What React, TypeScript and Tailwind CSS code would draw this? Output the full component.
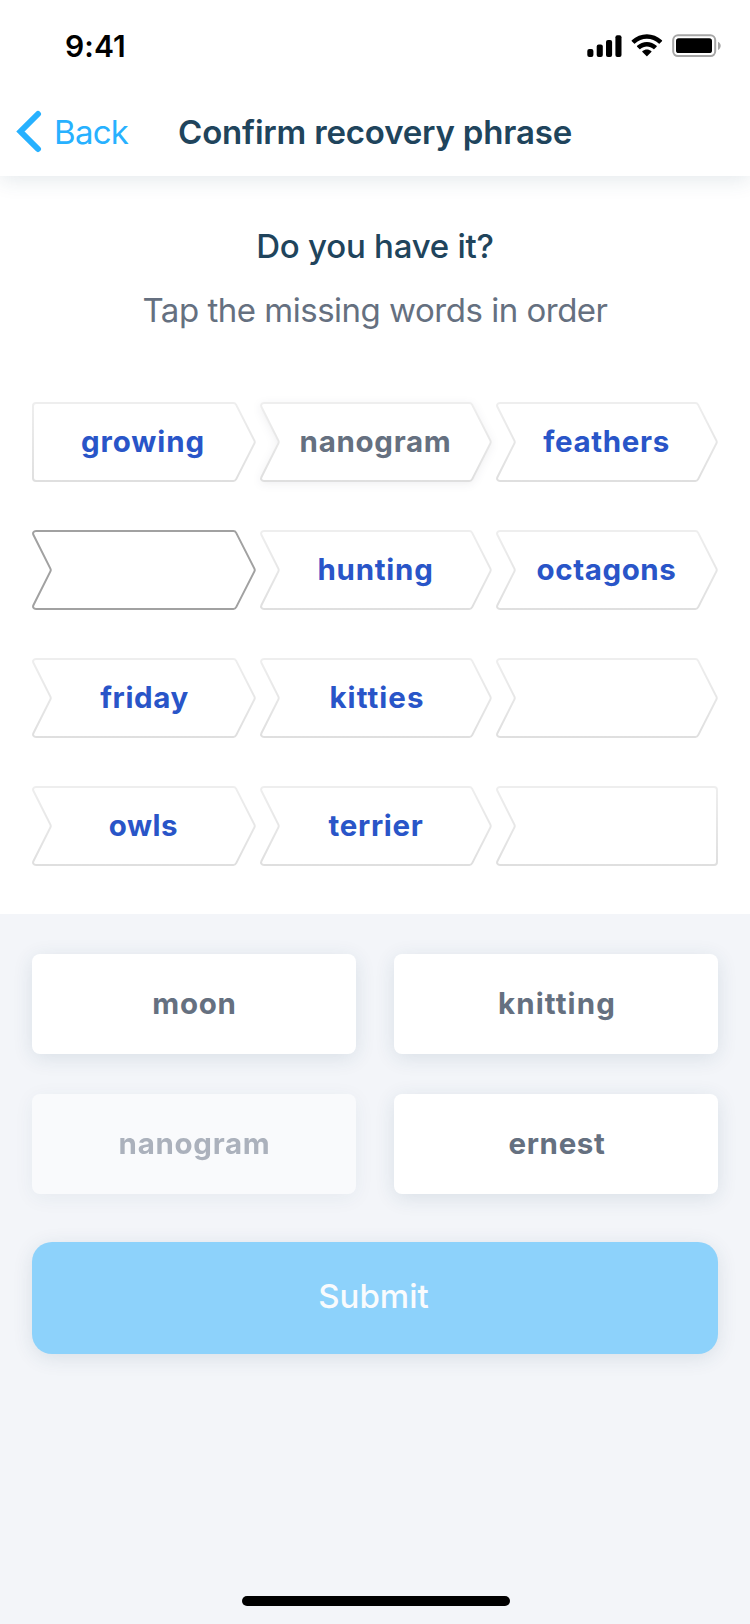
import React from "react";

type Status = "given" | "picked" | "active" | "empty";
interface Word {
  text: string;
  status: Status;
  tracking?: string;
}

const rows: Word[][] = [
  [
    { text: "growing", status: "given", tracking: "tracking-[0.9px] pr-[2px]" },
    { text: "nanogram", status: "picked", tracking: "tracking-[0.7px] pr-[1px]" },
    { text: "feathers", status: "given", tracking: "tracking-[0.65px] pr-[1px]" },
  ],
  [
    { text: "", status: "active" },
    { text: "hunting", status: "given", tracking: "tracking-[0.75px] pr-[1px]" },
    { text: "octagons", status: "given", tracking: "tracking-[0.6px] pr-[1px]" },
  ],
  [
    { text: "friday", status: "given", tracking: "tracking-[0.6px] pl-[1px]" },
    { text: "kitties", status: "given", tracking: "tracking-[1.05px] pl-[2px]" },
    { text: "", status: "empty" },
  ],
  [
    { text: "owls", status: "given", tracking: "tracking-[0.5px] pr-[1px]" },
    { text: "terrier", status: "given", tracking: "tracking-[0.7px]" },
    { text: "", status: "empty" },
  ],
];

const options = [
  { text: "moon", used: false, tracking: "tracking-[0.7px] pl-px" },
  { text: "knitting", used: false, tracking: "tracking-[1.1px] pl-[2px]" },
  { text: "nanogram", used: true, tracking: "tracking-[0.7px] pl-px" },
  { text: "ernest", used: false, tracking: "tracking-[0.65px] pl-[2px]" },
];

const widths = [224, 232, 222];

function outline(w: number, flatLeft: boolean, flatRight: boolean) {
  const right = flatRight
    ? `H${w - 4} Q${w - 1} 1 ${w - 1} 4 V76 Q${w - 1} 79 ${w - 4} 79`
    : `H${w - 22.6} Q${w - 20.8} 1 ${w - 19.8} 2.9 L${w - 1.6} 38.6 Q${w - 0.9} 40 ${w - 1.6} 41.4 L${w - 19.8} 77.1 Q${w - 20.8} 79 ${w - 22.6} 79`;
  const left = flatLeft
    ? "H4 Q1 79 1 76 V4 Q1 1 4 1 Z"
    : "H4 C1.6 79 0.4 77.2 1.5 75 L18.4 41.4 Q19.1 40 18.4 38.6 L1.5 5 C0.4 2.8 1.6 1 4 1 Z";
  return `M4 1 ${right} ${left}`;
}

function Chip({ word, row, col }: { word: Word; row: number; col: number }) {
  const w = widths[col];
  return (
    <div className="grid h-20 place-items-center" style={{ width: w }}>
      <svg
        width={w}
        height={80}
        viewBox={`0 0 ${w} 80`}
        className={`col-start-1 row-start-1 overflow-visible ${
          word.status === "picked" ? "drop-shadow-[0_2px_4px_rgba(30,30,60,0.07)]" : ""
        }`}
      >
        <path
          d={outline(w, row === 0 && col === 0, row === 3 && col === 2)}
          fill="#fff"
          stroke={word.status === "active" ? "#a1a1a1" : "url(#edge)"}
          strokeWidth={2}
        />
      </svg>
      <span
        className={`z-10 col-start-1 row-start-1 pb-[3px] text-[29.5px] leading-[40px] font-bold ${
          word.status === "picked" ? "text-[#657080]" : "text-[#2955c8]"
        } ${word.tracking ?? ""}`}
      >
        {word.text}
      </span>
    </div>
  );
}

function StatusIcons() {
  return (
    <svg width="138" height="26" viewBox="586 33 138 26">
      <rect x="587.3" y="49" width="6.1" height="8" rx="2" />
      <rect x="596.7" y="44.6" width="6.1" height="12.4" rx="2" />
      <rect x="606" y="40" width="6.1" height="17" rx="2" />
      <rect x="615.4" y="35.2" width="6.1" height="21.8" rx="2" />
      <path
        transform="translate(631.6 34.3) scale(2)"
        d="M7.637 2.277C9.853 2.277 11.984 3.129 13.59 4.656C13.71 4.774 13.904 4.772 14.023 4.652L15.179 3.486C15.239 3.425 15.273 3.343 15.272 3.257C15.272 3.172 15.237 3.09 15.176 3.03C10.961-1.01 4.311-1.01.096 3.03C.035 3.09 0 3.171 0 3.257C0 3.343.033 3.425.093 3.486L1.25 4.652C1.369 4.772 1.562 4.774 1.683 4.656C3.289 3.129 5.421 2.277 7.637 2.277ZM7.637 6.073C8.854 6.073 10.028 6.525 10.931 7.343C11.053 7.459 11.245 7.456 11.364 7.337L12.519 6.17C12.579 6.109 12.613 6.026 12.612 5.94C12.611 5.854 12.576 5.771 12.514 5.711C9.766 3.155 5.51 3.155 2.762 5.711C2.7 5.771 2.664 5.854 2.663 5.94C2.663 6.026 2.697 6.109 2.757 6.17L3.912 7.337C4.031 7.456 4.223 7.459 4.345 7.343C5.247 6.526 6.42 6.073 7.637 6.073ZM9.95 8.627C9.951 8.713 9.918 8.797 9.856 8.857L7.859 10.873C7.8 10.932 7.72 10.966 7.637 10.966C7.553 10.966 7.473 10.932 7.415 10.873L5.417 8.857C5.355 8.797 5.322 8.713 5.323 8.627C5.325 8.54 5.363 8.458 5.427 8.401C6.703 7.322 8.571 7.322 9.846 8.401C9.91 8.459 9.948 8.54 9.95 8.627Z"
      />
      <rect x="673.2" y="35.3" width="42" height="20.8" rx="4.8" fill="none" stroke="#a6a6a6" strokeWidth="2" />
      <path d="M718 41.7 V50 C719.7 49.3 720.7 47.7 720.7 45.85 C720.7 44 719.7 42.4 718 41.7 Z" fill="#a6a6a6" />
      <rect x="676" y="38.3" width="36" height="14.8" rx="2.7" />
    </svg>
  );
}

export default function App() {
  return (
    <div className="flex h-[1624px] w-[750px] flex-col bg-[#f3f5f9] font-['Inter','Liberation_Sans',sans-serif]">
      <svg width="0" height="0" className="absolute">
        <defs>
          <linearGradient id="edge" x1="0" y1="0" x2="0" y2="1">
            <stop offset="0" stopColor="#eeeeee" />
            <stop offset="1" stopColor="#dfdfdf" />
          </linearGradient>
        </defs>
      </svg>

      <header className="z-10 h-[176px] bg-white shadow-[0_4px_20px_rgba(30,75,95,0.12)]">
        <div className="flex h-[92px] items-center justify-between pr-[26px] pl-[65px]">
          <time className="text-[30px] leading-[40px] font-semibold tracking-[0.1px] text-black">9:41</time>
          <StatusIcons />
        </div>
        <div className="grid h-20 grid-cols-[1fr_auto_1fr] items-center px-4">
          <button className="flex items-center text-[#27b1ff]">
            <svg width="28" height="44" viewBox="16 110 28 44" fill="none" stroke="currentColor" strokeWidth="6" strokeLinecap="round">
              <path d="M38 114 L20.5 131.5 L38 149" />
            </svg>
            <span className="pl-[10px] text-[33px] leading-[40px] tracking-[-0.7px]">Back</span>
          </button>
          <h1 className="text-[33px] leading-[40px] font-semibold tracking-[-0.18px] text-[#20445c]">Confirm recovery phrase</h1>
        </div>
      </header>

      <main className="flex h-[738px] flex-col bg-white px-8 pt-[50px]">
        <h2 className="text-center text-[33px] leading-[40px] font-medium tracking-[-0.24px] text-[#20445c]">Do you have it?</h2>
        <p className="pt-6 text-center text-[33px] leading-[40px] tracking-[-0.49px] text-[#657080]">Tap the missing words in order</p>
        <div className="flex flex-col gap-12 pt-[72px]">
          {rows.map((row, r) => (
            <div key={r} className="flex gap-1">
              {row.map((word, c) => (
                <Chip key={c} word={word} row={r} col={c} />
              ))}
            </div>
          ))}
        </div>
      </main>

      <section className="flex flex-1 flex-col px-8 pt-10">
        <div className="grid grid-cols-2 gap-x-[38px] gap-y-10">
          {options.map((o) => (
            <button
              key={o.text}
              className={`h-[100px] rounded-lg bg-white pb-[3px] text-[29.5px] leading-[40px] font-bold text-[#657080] shadow-[0_4px_20px_rgba(30,75,95,0.12)] ${
                o.used ? "opacity-50" : ""
              } ${o.tracking}`}
            >
              {o.text}
            </button>
          ))}
        </div>
        <button className="mt-12 h-28 rounded-[20px] bg-[#8dd2fb] pr-[3px] pb-1 text-[33px] leading-[40px] font-medium text-[#f9fbfd] shadow-[0_4px_20px_rgba(30,75,95,0.12)]">
          Submit
        </button>
        <div className="mt-auto mb-[18px] ml-[210px] h-2.5 w-[268px] rounded-full bg-black" />
      </section>
    </div>
  );
}
